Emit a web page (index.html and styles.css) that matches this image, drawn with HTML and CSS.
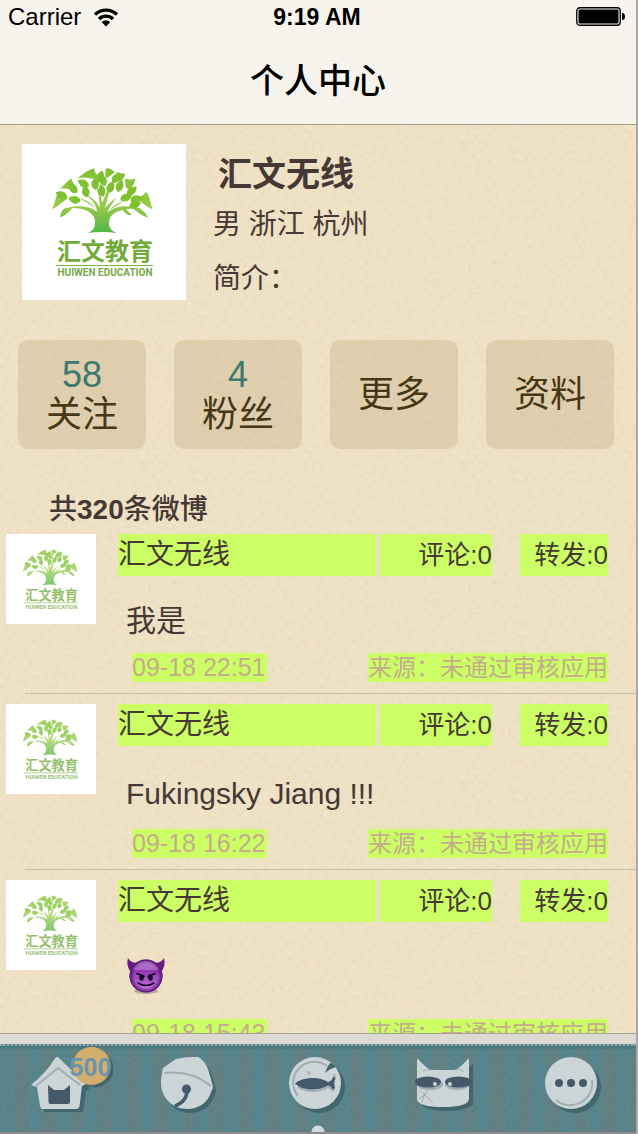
FILE: index.html
```html
<!DOCTYPE html>
<html lang="zh-CN">
<head>
<meta charset="utf-8">
<title>个人中心</title>
<meta name="viewport" content="width=device-width, initial-scale=1">
<link rel="stylesheet" href="styles.css">
</head>
<body>
<svg class="defs" aria-hidden="true">
  <defs>
    <linearGradient id="leafy" gradientUnits="userSpaceOnUse" x1="0" y1="28" x2="0" y2="226">
      <stop offset="0" stop-color="#7fc131"/><stop offset=".6" stop-color="#97c94a"/><stop offset="1" stop-color="#4db748"/>
    </linearGradient>
    <linearGradient id="imp" x1="0" y1="0" x2="0" y2="1">
      <stop offset="0" stop-color="#a65fc0"/><stop offset=".35" stop-color="#9238b0"/><stop offset="1" stop-color="#c77be0"/>
    </linearGradient>
    <radialGradient id="impEdge">
      <stop offset=".7" stop-color="#5a127c" stop-opacity="0"/><stop offset="1" stop-color="#4d0f6c"/>
    </radialGradient>
    <path id="leaf" d="M0 0C-16 -9 -15 -24 2 -38C15 -23 14 -9 0 0Z"/>
    <symbol id="logo" viewBox="0 0 164 156">
      <g transform="translate(24 14) scale(.3333)" fill="url(#leafy)">
        <path d="M124 225C143 220 150 205 146 184C142 160 106 146 62 151C102 139 134 146 153 162C151 142 143 128 117 108C141 120 153 132 160 148C163 126 158 100 143 74C158 92 167 114 168 136C176 118 184 100 191 82C190 108 182 130 176 150C186 140 197 131 211 118C202 134 192 145 184 163C210 141 252 140 288 153C245 150 207 155 193 178C182 204 195 220 212 225C184 221 154 221 124 225Z"/>
        <path d="M96 117C116 124 134 134 150 152C134 140 112 128 96 117ZM234 128C220 133 201 143 190 156C203 148 220 138 234 128Z"/>
        <path d="M18 153C30 132 26 120 39 100C46 114 67 114 63 124C51 129 38 146 18 153ZM320 153C310 128 312 114 300 102C290 116 268 120 275 126C288 130 299 148 320 153ZM94 61C111 50 119 39 145 31C143 45 159 51 151 60C137 66 118 53 94 61ZM178 34C187 27 192 31 207 43C197 50 187 59 181 60C174 50 181 42 178 34Z"/>
        <path d="M39 92C54 86 58 70 78 62C78 76 92 82 84 92C70 98 54 88 39 92ZM236 62C252 66 258 64 268 62C266 78 258 92 244 92C236 84 240 72 236 62ZM212 42C222 46 228 46 238 48C234 62 226 72 214 70C208 60 214 52 212 42Z"/>
        <use href="#leaf" transform="translate(64 118) rotate(-70)"/><use href="#leaf" transform="translate(94 104) rotate(-45)"/>
        <use href="#leaf" transform="translate(104 128) rotate(-82)"/><use href="#leaf" transform="translate(124 118) rotate(-15)"/>
        <use href="#leaf" transform="translate(129 84) rotate(-65)"/><use href="#leaf" transform="translate(149 96) rotate(-5)"/>
        <use href="#leaf" transform="translate(158 74) rotate(15)"/><use href="#leaf" transform="translate(178 84) rotate(-22)"/>
        <use href="#leaf" transform="translate(188 105) rotate(18)"/><use href="#leaf" transform="translate(201 76) rotate(30)"/>
        <use href="#leaf" transform="translate(216 102) rotate(15)"/><use href="#leaf" transform="translate(244 112) rotate(45)"/>
        <use href="#leaf" transform="translate(223 126) rotate(66)"/><use href="#leaf" transform="translate(253 128) rotate(74)"/>
        <use href="#leaf" transform="translate(250 148) rotate(65)"/><use href="#leaf" transform="translate(172 116) rotate(-15)"/>
        <path d="M62 149C48 151 42 167 43 178C58 174 68 162 79 151ZM276 150C294 156 302 170 306 179C287 174 274 162 260 151ZM232 148C246 156 247 166 259 169C242 176 234 160 224 151Z"/>
      </g>
      <text class="logo-cn" x="83" y="116" text-anchor="middle">汇文教育</text>
      <path d="M34 121H131V122H34Z" fill="#79b53f"/>
      <text class="logo-en" x="83" y="132" text-anchor="middle">HUIWEN EDUCATION</text>
    </symbol>
  </defs>
</svg>

<div class="phone">
  <header class="top">
    <div class="status">
      <span class="carrier">Carrier
        <svg width="26" height="20" viewBox="0 0 26 20" aria-label="Wi-Fi"><path d="M2 7.500A16 16 0 0 1 24 7.500M6 12A10 10 0 0 1 20 12" fill="none" stroke="#000" stroke-width="3.200"/><path d="M13 19.500L8.700 15Q13 11.500 17.300 15Z"/></svg>
      </span>
      <time class="clock">9:19 AM</time>
      <svg class="battery" width="50" height="20" viewBox="0 0 50 20" aria-label="电量"><rect x=".75" y=".75" width="43.500" height="17.500" rx="3" fill="none" stroke="#000" stroke-width="1.300"/><rect x="2.500" y="2.500" width="40" height="14" rx="1"/><path d="M46 6Q49 6 49 9.500Q49 13 46 13Z"/></svg>
    </div>
    <h1 class="title">个人中心</h1>
  </header>

  <main class="content">
    <section class="profile">
      <svg class="portrait" viewBox="0 0 164 156" role="img" aria-label="汇文教育"><use href="#logo"/></svg>
      <div class="who">
        <h2 class="name">汇文无线</h2>
        <p class="place">男 浙江 杭州</p>
        <p class="bio">简介：</p>
      </div>
    </section>

    <nav class="tiles">
      <button class="tile"><span class="count">58</span><span>关注</span></button>
      <button class="tile"><span class="count">4</span><span>粉丝</span></button>
      <button class="tile"><span>更多</span></button>
      <button class="tile"><span>资料</span></button>
    </nav>

    <h3 class="total">共<b>320</b>条微博</h3>

    <article class="post">
      <svg class="avatar" viewBox="0 0 164 156" role="img" aria-label="汇文教育"><use href="#logo"/></svg>
      <div class="entry">
        <div class="heads"><span class="author">汇文无线</span><span class="comments">评论:0</span><span class="reposts">转发:0</span></div>
        <p class="text">我是</p>
        <div class="meta"><time class="date">09-18 22:51</time><span class="source">来源：未通过审核应用</span></div>
      </div>
    </article>
    <article class="post">
      <svg class="avatar" viewBox="0 0 164 156" role="img" aria-label="汇文教育"><use href="#logo"/></svg>
      <div class="entry">
        <div class="heads"><span class="author">汇文无线</span><span class="comments">评论:0</span><span class="reposts">转发:0</span></div>
        <p class="text latin">Fukingsky Jiang !!!</p>
        <div class="meta"><time class="date">09-18 16:22</time><span class="source">来源：未通过审核应用</span></div>
      </div>
    </article>
    <article class="post">
      <svg class="avatar" viewBox="0 0 164 156" role="img" aria-label="汇文教育"><use href="#logo"/></svg>
      <div class="entry">
        <div class="heads"><span class="author">汇文无线</span><span class="comments">评论:0</span><span class="reposts">转发:0</span></div>
        <p class="text emoji">
          <svg width="38" height="38" viewBox="0 0 38 38" role="img" aria-label="小恶魔">
            <path d="M3 14C0 9 0 5 1 1C3 5 7 6 12 6ZM35 14C38 9 38 5 37 1C35 5 31 6 26 6Z" fill="#6a1a88"/>
            <ellipse cx="19" cy="34" rx="12" ry="3" fill="#6b5a50" opacity=".4"/>
            <circle cx="19" cy="19" r="16.500" fill="url(#imp)"/><circle cx="19" cy="19" r="16.500" fill="url(#impEdge)"/>
            <path d="M6 13Q10 4 19 4Q28 4 32 13Z" fill="#fff" opacity=".2"/>
            <path d="M10 16.500L17 19.500M28 16.500L21 19.500" stroke="#160020" stroke-width="1.600" stroke-linecap="round"/>
            <ellipse cx="14.500" cy="20.500" rx="2.200" ry="3.200" fill="#160020"/><ellipse cx="23.500" cy="20.500" rx="2.200" ry="3.200" fill="#160020"/>
            <path d="M11 26Q19 31 27 26" fill="none" stroke="#160020" stroke-width="1.600" stroke-linecap="round"/>
          </svg>
        </p>
        <div class="meta"><time class="date">09-18 15:43</time><span class="source">来源：未通过审核应用</span></div>
      </div>
    </article>
  </main>

  <footer class="dock">
    <div class="tabs">
      <button class="tab" aria-label="首页">
        <svg width="84" height="80" viewBox="22 1050 84 80">
          <path class="shade" d="M62 1061L90 1088L86 1091L83 1112H44L41 1091Z"/>
          <circle class="shade" cx="95" cy="1069" r="18.500"/>
          <path class="paper" d="M58 1057L86 1084L82 1086L79.500 1106Q79 1109 76 1109H43Q40.500 1109 40 1106L37 1087L31 1085Q45 1074 55 1058.500Q57 1056 58 1057Z"/>
          <path class="crease" d="M36 1086L58 1068L80 1085"/>
          <path class="ink" d="M48 1085L54 1090H64L70 1085V1102Q70 1104 68 1104H50.500Q48.500 1104 48.500 1102Z"/>
          <circle cx="91.500" cy="1066" r="19" fill="#d2ad6d"/>
        </svg>
        <span class="badge">500</span>
      </button>
      <button class="tab" aria-label="消息">
        <svg width="84" height="80" viewBox="149 1050 84 80">
          <path class="shade" transform="translate(3 4)" d="M163 1068L176 1059Q184 1057 193 1057H198Q201 1058 204 1062C209 1068 210 1077 213 1086Q213 1089 211 1092C208 1103 198 1109 187 1109C172 1109 161 1097 161 1083C161 1077 162 1073 163 1068Z"/>
          <path class="paper" d="M163 1068L176 1059Q184 1057 193 1057H198Q201 1058 204 1062C209 1068 210 1077 213 1086Q213 1089 211 1092C208 1103 198 1109 187 1109C172 1109 161 1097 161 1083C161 1077 162 1073 163 1068Z"/>
          <path class="crease" d="M164 1073Q191 1070 211 1086"/>
          <circle class="ink" cx="186.500" cy="1089" r="4.500"/>
          <path d="M187 1091Q187 1101 175 1106" fill="none" stroke="#44596a" stroke-width="3.500"/>
        </svg>
      </button>
      <button class="tab" aria-label="个人中心" aria-current="page">
        <svg width="84" height="80" viewBox="276 1050 84 80">
          <circle class="shade" cx="319" cy="1087" r="26"/><circle class="paper" cx="315" cy="1083" r="26"/>
          <path class="crease" d="M298 1096A21 21 0 0 1 327 1066M334 1074A21 21 0 0 1 335 1080"/>
          <path d="M333 1064L336 1067Q329 1069 325 1073Q327 1067 330 1063Z" fill="#46646b"/>
          <path class="crease" d="M298 1087C308 1092 319 1092 328 1087L334 1091"/>
          <path class="ink" d="M295 1083.500C300 1078 318 1075 328 1082Q332 1081 333 1077H335Q333.500 1083 335 1088L333 1090Q331 1086 328 1085.500C318 1092 301 1090 295 1083.500Z"/>
          <path class="crease thin" d="M306 1071L311 1074M308 1075L310 1071"/>
        </svg>
      </button>
      <button class="tab" aria-label="发现">
        <svg width="84" height="80" viewBox="403 1050 84 80">
          <path class="shade" transform="translate(4 4)" d="M417 1060L430 1070H456L469 1060V1101Q460 1107 443 1107Q421 1107 417 1100Z"/>
          <path class="paper" d="M418 1059Q424 1066 430 1070H456Q462 1066 468 1059Q469 1058 469 1061V1099Q468 1107 443 1107Q418 1107 417 1099V1061Q417 1058 418 1059Z"/>
          <path class="crease thin" d="M423 1071Q426 1069 432 1070M454 1070Q461 1068 464 1072M420 1090L433 1103M429 1088Q423 1095 422 1102M419 1099L426 1094"/>
          <ellipse cx="430" cy="1084.500" rx="13" ry="5.500" fill="#9fabb0"/><ellipse cx="457" cy="1084.500" rx="12" ry="5.500" fill="#9fabb0"/>
          <ellipse class="ink" cx="428" cy="1082" rx="13" ry="5.500"/><ellipse class="ink" cx="458.500" cy="1082" rx="13.500" ry="5.500"/>
          <circle class="paper" cx="435" cy="1084" r="2"/><circle class="paper" cx="450" cy="1084" r="2"/>
        </svg>
      </button>
      <button class="tab" aria-label="更多">
        <svg width="84" height="80" viewBox="530 1050 84 80">
          <circle class="shade" cx="575" cy="1087" r="26"/><circle class="paper" cx="571" cy="1083" r="26"/>
          <path class="crease" d="M592 1080A22 22 0 0 1 556 1100"/>
          <circle class="ink" cx="559" cy="1083" r="4"/><circle class="ink" cx="571" cy="1083" r="4"/><circle class="ink" cx="583" cy="1083" r="4"/>
        </svg>
      </button>
    </div>
  </footer>
</div>
</body>
</html>
```
FILE: styles.css
```css
* { box-sizing: border-box; }

body {
  margin: 0;
  background: #c9c9c9;
  color: #463834;
  font-family: "Liberation Sans", "Noto Sans CJK SC", sans-serif;
}

h1, h2, h3, p { margin: 0; }

button {
  padding: 0;
  border: 0;
  background: none;
  color: inherit;
  font: inherit;
}

.defs {
  position: absolute;
  width: 0;
  height: 0;
}

.phone {
  display: flex;
  flex-direction: column;
  height: 100vh;
  border-right: 2px solid #a9a9a9;
}

/* Header */
.top {
  flex: none;
  padding-bottom: 12px;
  border-bottom: 1px solid #a49c8c;
  background: #f7f4ed;
  color: #000;
}

.status {
  display: grid;
  grid-template-columns: 1fr auto 1fr;
  align-items: center;
  height: 34px;
  padding: 0 10px 0 8px;
}

.carrier {
  display: flex;
  align-items: center;
  gap: 12px;
  font-size: 24px;
}

.clock {
  font-size: 23px;
  font-weight: bold;
}

.battery { justify-self: end; }

.title {
  padding-top: 16px;
  font-size: 34px;
  font-weight: 500;
  line-height: 62px;
  text-align: center;
}

/* Paper page */
.content {
  flex: 1;
  min-height: 0;
  overflow: hidden;
  background: #f0e4ca url("data:image/svg+xml,%3Csvg xmlns='http://www.w3.org/2000/svg' width='320' height='320'%3E%3Cfilter id='n' x='0' y='0' width='1' height='1'%3E%3CfeTurbulence type='fractalNoise' baseFrequency='.25 .2' numOctaves='3' stitchTiles='stitch'/%3E%3CfeColorMatrix values='0 0 0 0 .76 0 0 0 0 .6 0 0 0 0 .36 .5 .3 0 0 -.26'/%3E%3C/filter%3E%3Crect width='320' height='320' filter='url(%23n)'/%3E%3C/svg%3E");
}

.profile {
  display: flex;
  gap: 27px;
  padding: 19px 22px 0;
}

.portrait {
  flex: none;
  width: 164px;
  height: 156px;
  background: #fff;
}

.logo-cn {
  fill: #72ac38;
  font: bold 24px "Noto Sans CJK SC", sans-serif;
}

.logo-en {
  fill: #78a848;
  font: bold 10px "Roboto", sans-serif;
}

.name {
  padding: 4px 0 0 5px;
  font-size: 34px;
  line-height: 52px;
}

.place, .bio {
  font-size: 28px;
  line-height: 50px;
}

.bio { padding-top: 4px; }

.who { height: 156px; }

.tiles {
  display: grid;
  grid-template-columns: repeat(4, 1fr);
  gap: 28px;
  padding: 40px 22px 0 18px;
}

.tile {
  display: flex;
  flex-direction: column;
  justify-content: center;
  align-items: center;
  height: 109px;
  border-radius: 10px;
  background: rgba(150, 115, 55, .16);
  color: #463815;
  font-size: 36px;
  line-height: 40px;
}

.count { color: #3c7a70; }

.total {
  padding: 41px 0 4px 49px;
  font-size: 28px;
  font-weight: 500;
  line-height: 40px;
}

/* Posts */
.post {
  display: flex;
  align-items: flex-start;
  gap: 22px;
  padding: 0 28px 12px 6px;
  margin-bottom: 10px;
  background: linear-gradient(#c8bfb4, #c8bfb4) 25px 100% / 100% 1px no-repeat;
}

.avatar {
  flex: none;
  width: 90px;
  height: 90px;
  background: #fff;
}

.avatar use { opacity: .75; }

.entry {
  flex: 1;
  min-width: 0;
}

.heads {
  display: grid;
  grid-template-columns: 1fr 112px 28px 88px;
  line-height: 42px;
}

.author, .comments, .reposts, .date, .source { background: #ccff66; }

.author {
  margin-right: 4px;
  font-size: 28px;
}

.comments, .reposts {
  font-size: 26px;
  text-align: right;
}

.reposts { grid-column: 4; }

.text {
  padding: 24px 0 12px 8px;
  font-size: 30px;
  line-height: 41px;
}

.text.latin { line-height: 47px; }

.text.emoji {
  padding: 35px 0 24px 9px;
  line-height: 0;
}

.meta {
  display: flex;
  justify-content: space-between;
  padding-left: 14px;
  color: #c4ac8c;
  line-height: 29px;
}

.date {
  padding-right: 2px;
  font-size: 25px;
}

.source { font-size: 24px; }

/* Tab bar */
.dock {
  flex: none;
  border-top: 1px solid #a8a294;
  border-bottom: 2px solid #8f8a8c;
  background: #dcdad3;
  padding-top: 10px;
}

.tabs {
  display: flex;
  height: 88px;
  border-top: 2px dotted #8fa8a8;
  background:
    radial-gradient(circle at 50% 100%, #d3dadb 6px, transparent 7px) 50% 100% / 16px 7px no-repeat,
    linear-gradient(rgba(50, 110, 115, .6), transparent 5px),
    url("data:image/svg+xml,%3Csvg xmlns='http://www.w3.org/2000/svg' width='320' height='320'%3E%3Cfilter id='n' x='0' y='0' width='1' height='1'%3E%3CfeTurbulence type='fractalNoise' baseFrequency='.3' numOctaves='3' stitchTiles='stitch'/%3E%3CfeColorMatrix values='0 0 0 0 .2 0 0 0 0 .3 0 0 0 0 .32 .4 .2 0 0 -.22'/%3E%3C/filter%3E%3Crect width='320' height='320' filter='url(%23n)'/%3E%3C/svg%3E"),
    repeating-linear-gradient(90deg, #55838a 0 14px, #607e81 14px 28px);
}

.tab {
  position: relative;
  display: flex;
  flex: 1;
  justify-content: center;
  padding-top: 4px;
}

.tab svg { overflow: visible; }

.badge {
  position: absolute;
  top: 5px;
  left: 50%;
  margin-left: 6px;
  color: #6a94ae;
  font-size: 25px;
  font-weight: bold;
  line-height: 32px;
}

.paper { fill: #cbd5d7; }

.ink { fill: #44596a; }

.shade { fill: #3c5f66; opacity: .8; }

.crease {
  fill: none;
  stroke: #a2adb1;
  stroke-width: 2;
}

.crease.thin { stroke-width: 1; }
```
